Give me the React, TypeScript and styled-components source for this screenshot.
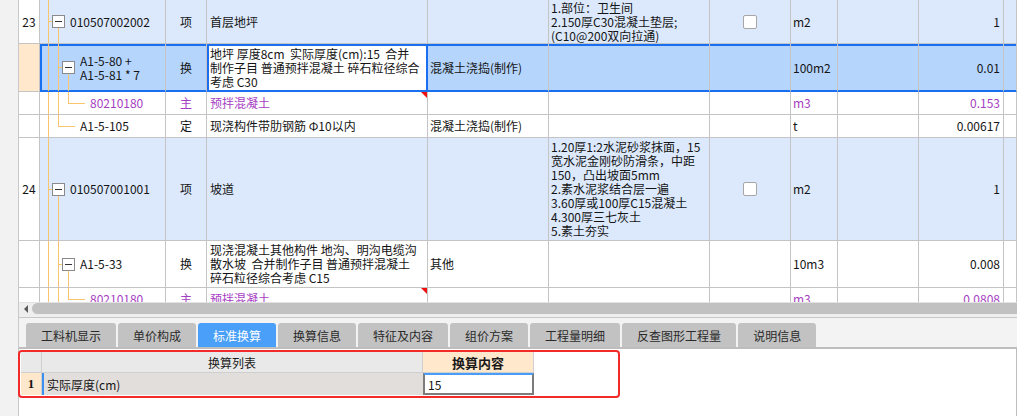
import React from 'react';
import styled, { createGlobalStyle, css } from 'styled-components';

const BLUE = '#1a6ff0';
const LINE = '#c4c4c4';
const PURPLE = '#a640c2';
const ORANGE = '#f9c56e';

const GlobalStyle = createGlobalStyle`
  html, body { margin: 0; padding: 0; }
  body {
    font-family: "Noto Sans CJK SC", "Noto Sans", sans-serif;
    font-size: 12px;
    color: #141414;
    background: #fff;
  }
  #root { width: 1017px; height: 416px; }
`;

const Page = styled.div`
  display: flex;
  width: 1017px;
  height: 416px;
  overflow: hidden;
  background: #f3f3f3;
`;

const LeftStrip = styled.div`
  flex: none;
  width: 18px;
  background: #f2f2f2;
  border-right: 1px solid #c9c9c9;
`;

const Body = styled.div`
  flex: 1;
  min-width: 0;
  display: flex;
  flex-direction: column;
`;

const GridArea = styled.div`
  flex: none;
  height: 302px;
  overflow: hidden;
  background: #fff;
`;

const COLS = '21px 126px 41px 221px 121px 161px 81px 47px 81px 85px 1fr';

const Row = styled.div<{ $h: number }>`
  display: grid;
  grid-template-columns: ${COLS};
  height: ${(p) => p.$h}px;
`;

type Edge = 'row' | 'first' | 'current';

const edgeCss = (e?: Edge) => {
  if (!e) return '';
  const base = `inset 0 2px 0 ${BLUE}, inset 0 -1px 0 ${BLUE}`;
  if (e === 'first') return css`border-bottom-color: ${BLUE}; box-shadow: ${base}, inset 2px 0 0 ${BLUE};`;
  if (e === 'current')
    return css`border-bottom-color: ${BLUE}; box-shadow: ${base}, inset 2px 0 0 ${BLUE}, inset -1px 0 0 ${BLUE}; border-right-color: ${BLUE};`;
  return css`border-bottom-color: ${BLUE}; box-shadow: ${base};`;
};

const Cell = styled.div<{
  $bg?: string;
  $align?: 'left' | 'center' | 'right';
  $pl?: number;
  $pr?: number;
  $purple?: boolean;
  $edge?: Edge;
  $flag?: boolean;
}>`
  position: relative;
  box-sizing: border-box;
  display: flex;
  align-items: center;
  justify-content: ${(p) => (p.$align === 'center' ? 'center' : p.$align === 'right' ? 'flex-end' : 'flex-start')};
  padding-left: ${(p) => p.$pl ?? 0}px;
  padding-right: ${(p) => p.$pr ?? 0}px;
  background: ${(p) => p.$bg ?? '#fff'};
  color: ${(p) => (p.$purple ? PURPLE : '#141414')};
  border-right: 1px solid ${LINE};
  border-bottom: 1px solid ${LINE};
  overflow: hidden;
  white-space: pre;
  line-height: 14px;
  font-size: 12px;
  ${(p) => edgeCss(p.$edge)}
  ${(p) =>
    p.$flag &&
    css`
      &::after {
        content: '';
        position: absolute;
        top: 0;
        right: 0;
        border-top: 6px solid #f01010;
        border-left: 6px solid transparent;
      }
    `}
`;

const Guides = styled.svg`
  position: absolute;
  inset: 0;
  width: 100%;
  height: 100%;
  pointer-events: none;
`;

const CodeContent = styled.div<{ $pl: number }>`
  position: relative;
  z-index: 1;
  display: flex;
  align-items: center;
  padding-left: ${(p) => p.$pl}px;
`;

const ExpandBox = styled.span`
  position: relative;
  flex: none;
  box-sizing: border-box;
  width: 13px;
  height: 13px;
  margin-right: 5px;
  border: 1px solid #8a8a8a;
  background: #fff;
  &::after {
    content: '';
    position: absolute;
    left: 2px;
    right: 2px;
    top: 5px;
    height: 1px;
    background: #333;
  }
`;

const Check = styled.span`
  box-sizing: border-box;
  width: 14px;
  height: 14px;
  border: 1px solid #a6a6a6;
  border-radius: 2px;
  background: #fff;
`;

type Seg = { x: number; part: 'full' | 'top' | 'bottom' };
type TreeSpec = { v: Seg[]; h: [number, number]; box?: number; text: number };

const T_BILL: TreeSpec = { v: [{ x: 8, part: 'full' }, { x: 18, part: 'bottom' }], h: [8, 12], box: 12, text: 30 };
const T_SUB: TreeSpec = {
  v: [{ x: 8, part: 'full' }, { x: 18, part: 'full' }, { x: 28, part: 'bottom' }],
  h: [18, 22],
  box: 22,
  text: 40,
};
const T_MAT: TreeSpec = {
  v: [{ x: 8, part: 'full' }, { x: 18, part: 'full' }, { x: 28, part: 'top' }],
  h: [28, 45],
  text: 50,
};
const T_LAST: TreeSpec = { v: [{ x: 8, part: 'full' }, { x: 18, part: 'top' }], h: [18, 35], text: 40 };

function TreeLines({ spec }: { spec: TreeSpec }) {
  return (
    <Guides shapeRendering="crispEdges">
      {spec.v.map((s, i) => (
        <line
          key={i}
          x1={s.x + 0.5}
          x2={s.x + 0.5}
          y1={s.part === 'bottom' ? '50%' : '0'}
          y2={s.part === 'top' ? '50%' : '100%'}
          stroke={ORANGE}
          strokeWidth={1}
        />
      ))}
      <line x1={spec.h[0]} x2={spec.h[1]} y1="50%" y2="50%" stroke={ORANGE} strokeWidth={1} />
    </Guides>
  );
}

type RowData = {
  num?: string;
  h: number;
  tone: 'bill' | 'sel' | 'plain';
  tree: TreeSpec;
  code: string;
  type: string;
  name: string;
  spec?: string;
  feat?: string;
  check?: boolean;
  unit: string;
  qty: string;
  purple?: boolean;
  flag?: boolean;
};

const ROWS: RowData[] = [
  {
    num: '23',
    h: 44,
    tone: 'bill',
    tree: T_BILL,
    code: '010507002002',
    type: '项',
    name: '首层地坪',
    feat: '1.部位：卫生间\n2.150厚C30混凝土垫层;\n(C10@200双向拉通)',
    check: true,
    unit: 'm2',
    qty: '1',
  },
  {
    h: 48,
    tone: 'sel',
    tree: T_SUB,
    code: 'A1-5-80 +\nA1-5-81 * 7',
    type: '换',
    name: '地坪 厚度8cm  实际厚度(cm):15  合并\n制作子目 普通预拌混凝土 碎石粒径综合\n考虑 C30',
    spec: '混凝土浇捣(制作)',
    unit: '100m2',
    qty: '0.01',
  },
  { h: 23, tone: 'plain', tree: T_MAT, code: '80210180', type: '主', name: '预拌混凝土', unit: 'm3', qty: '0.153', purple: true, flag: true },
  {
    h: 23,
    tone: 'plain',
    tree: T_LAST,
    code: 'A1-5-105',
    type: '定',
    name: '现浇构件带肋钢筋 Φ10以内',
    spec: '混凝土浇捣(制作)',
    unit: 't',
    qty: '0.00617',
  },
  {
    num: '24',
    h: 103,
    tone: 'bill',
    tree: T_BILL,
    code: '010507001001',
    type: '项',
    name: '坡道',
    feat:
      '1.20厚1:2水泥砂浆抹面，15\n宽水泥金刚砂防滑条，中距\n150，凸出坡面5mm\n2.素水泥浆结合层一遍\n3.60厚或100厚C15混凝土\n4.300厚三七灰土\n5.素土夯实',
    check: true,
    unit: 'm2',
    qty: '1',
  },
  {
    h: 47,
    tone: 'plain',
    tree: T_SUB,
    code: 'A1-5-33',
    type: '换',
    name: '现浇混凝土其他构件 地沟、明沟电缆沟\n散水坡  合并制作子目 普通预拌混凝土\n碎石粒径综合考虑 C15',
    spec: '其他',
    unit: '10m3',
    qty: '0.008',
  },
  { h: 23, tone: 'plain', tree: T_MAT, code: '80210180', type: '主', name: '预拌混凝土', unit: 'm3', qty: '0.0808', purple: true, flag: true },
];

const TONE = { bill: '#dce9fc', sel: '#b5d5fd', plain: '#ffffff' };

function DataRow({ r }: { r: RowData }) {
  const bg = TONE[r.tone];
  const sel = r.tone === 'sel';
  const e: Edge | undefined = sel ? 'row' : undefined;
  const p = r.purple;
  return (
    <Row $h={r.h}>
      <Cell $bg={sel ? '#ffe8cc' : '#fff'} $align="center">
        {r.num}
      </Cell>
      <Cell $bg={bg} $purple={p} $edge={sel ? 'first' : undefined}>
        <TreeLines spec={r.tree} />
        <CodeContent $pl={r.tree.box ?? r.tree.text}>
          {r.tree.box !== undefined && <ExpandBox />}
          <span>{r.code}</span>
        </CodeContent>
      </Cell>
      <Cell $bg={bg} $align="center" $purple={p} $edge={e}>
        {r.type}
      </Cell>
      <Cell $bg={sel ? '#fff' : bg} $pl={3} $purple={p} $flag={r.flag} $edge={sel ? 'current' : undefined}>
        {r.name}
      </Cell>
      <Cell $bg={bg} $pl={2} $edge={e}>
        {r.spec}
      </Cell>
      <Cell $bg={bg} $pl={2} $edge={e}>
        {r.feat}
      </Cell>
      <Cell $bg={bg} $align="center" $edge={e}>
        {r.check && <Check />}
      </Cell>
      <Cell $bg={bg} $pl={2} $purple={p} $edge={e}>
        {r.unit}
      </Cell>
      <Cell $bg={bg} $edge={e} />
      <Cell $bg={bg} $align="right" $pr={3} $purple={p} $edge={e}>
        {r.qty}
      </Cell>
      <Cell $bg={bg} $edge={e} />
    </Row>
  );
}

const ScrollBar = styled.div`
  flex: none;
  display: flex;
  height: 14px;
  box-sizing: border-box;
  background: #eeeeee;
  border-top: 1px solid #e2e2e2;
  padding-bottom: 2px;
`;

const ScrollArrow = styled.div`
  flex: none;
  width: 13px;
  display: flex;
  align-items: center;
  justify-content: center;
  &::before {
    content: '';
    border-right: 4px solid #5a5a5a;
    border-top: 4px solid transparent;
    border-bottom: 4px solid transparent;
  }
`;

const ScrollThumb = styled.div`
  flex: 1;
  background: #c1c1c1;
  border-radius: 6px 0 0 6px;
`;

const Divider = styled.div`
  flex: none;
  height: 2px;
  box-sizing: border-box;
  border-bottom: 1px solid #c6c6c6;
  background: #f0f0f0;
`;

const TabBar = styled.div`
  flex: none;
  height: 29px;
  display: flex;
  align-items: flex-end;
  gap: 2px;
  padding-left: 7px;
  background: #f3f3f3;
`;

const Tab = styled.div<{ $active?: boolean }>`
  height: 24px;
  padding: 0 15px;
  display: flex;
  align-items: center;
  font-size: 12px;
  border-radius: 3px 3px 0 0;
  background: ${(p) => (p.$active ? '#4a9ff8' : '#c2c2c2')};
  color: ${(p) => (p.$active ? '#fff' : '#2a2a2a')};
`;

const Panel = styled.div`
  flex: 1;
  background: #fff;
  border-top: 2px solid #bebebe;
  border-right: 1px solid #bebebe;
`;

const RedBox = styled.div`
  box-sizing: border-box;
  width: 602px;
  height: 48px;
  margin: 1px 0 0 -1px;
  padding: 0 1px 1px 1px;
  border: 2px solid #f22a2a;
  border-radius: 4px;
  background: #fff;
`;

const SubGrid = styled.div`
  display: grid;
  grid-template-columns: 21px 381px 111px;
  grid-template-rows: 21px 22px;
`;

const SubHead = styled.div<{ $hot?: boolean }>`
  box-sizing: border-box;
  display: flex;
  align-items: center;
  justify-content: center;
  background: ${(p) => (p.$hot ? '#ffe8cc' : '#e9e9e9')};
  border-right: 1px solid #cfcfcf;
  border-bottom: 1px solid #cfcfcf;
  font-size: ${(p) => (p.$hot ? '13px' : '12px')};
  font-weight: ${(p) => (p.$hot ? 700 : 400)};
  color: #1a1a1a;
`;

const SubIndex = styled.div`
  box-sizing: border-box;
  display: flex;
  align-items: center;
  justify-content: center;
  background: #ffe7cb;
  border-right: 1px solid #cfcfcf;
  font-family: "Liberation Serif", serif;
  font-weight: 700;
  font-size: 13px;
`;

const SubName = styled.div`
  box-sizing: border-box;
  display: flex;
  align-items: center;
  padding-left: 3px;
  background: #e2dedb;
  border-left: 2px solid #3d8ff0;
  font-size: 12px;
`;

const SubValue = styled.div`
  box-sizing: border-box;
  display: flex;
  align-items: center;
  padding-left: 3px;
  background: #fff;
  border: 2px solid #7c7c7c;
  border-top-color: #4a9cf6;
  font-size: 12px;
`;

const TABS = ['工料机显示', '单价构成', '标准换算', '换算信息', '特征及内容', '组价方案', '工程量明细', '反查图形工程量', '说明信息'];

export default function App() {
  return (
    <>
      <GlobalStyle />
      <Page>
        <LeftStrip />
        <Body>
          <GridArea>
            {ROWS.map((r, i) => (
              <DataRow key={i} r={r} />
            ))}
          </GridArea>
          <ScrollBar>
            <ScrollArrow />
            <ScrollThumb />
          </ScrollBar>
          <Divider />
          <TabBar>
            {TABS.map((t) => (
              <Tab key={t} $active={t === '标准换算'}>
                {t}
              </Tab>
            ))}
          </TabBar>
          <Panel>
            <RedBox>
              <SubGrid>
                <SubHead />
                <SubHead>换算列表</SubHead>
                <SubHead $hot>换算内容</SubHead>
                <SubIndex>1</SubIndex>
                <SubName>实际厚度(cm)</SubName>
                <SubValue>15</SubValue>
              </SubGrid>
            </RedBox>
          </Panel>
        </Body>
      </Page>
    </>
  );
}
